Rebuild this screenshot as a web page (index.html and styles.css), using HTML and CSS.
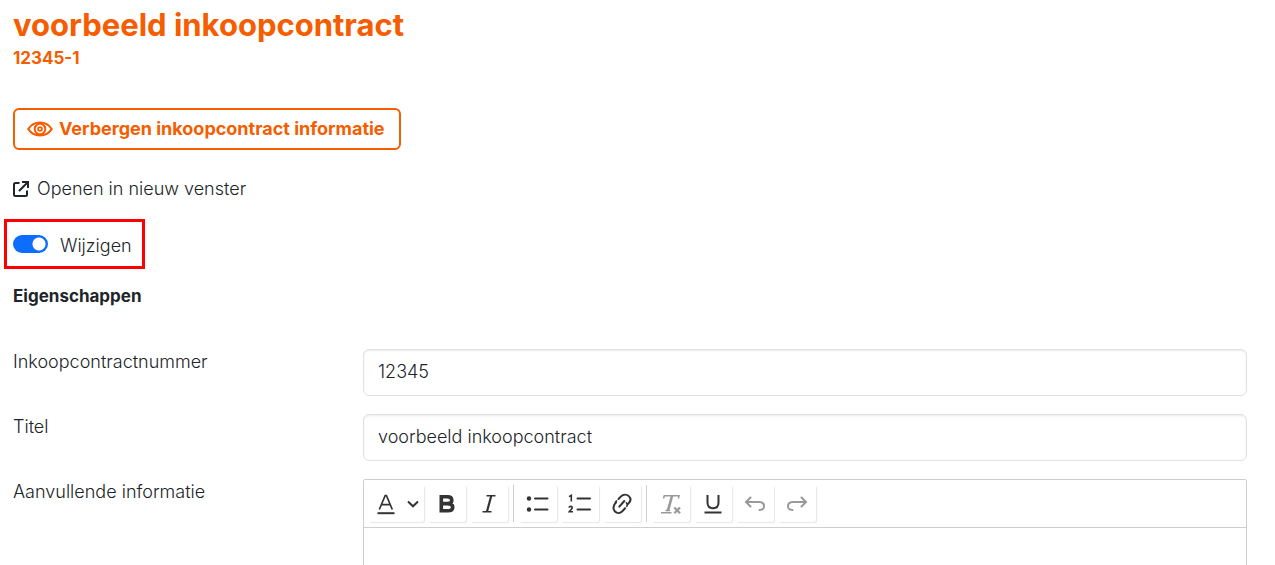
FILE: index.html
```html
<!DOCTYPE html>
<html lang="nl">

<head>
    <meta charset="UTF-8">
    <meta name="viewport" content="width=device-width, initial-scale=1.0">
    <title>voorbeeld inkoopcontract</title>
    <link rel="stylesheet" href="styles.css">
</head>

<body>
    <main class="page">
        <h1 class="title">voorbeeld inkoopcontract</h1>
        <p class="number">12345-1</p>

        <button type="button" class="toggle-info">
            <svg width="26" height="16" viewBox="0 0 26 16" fill="none" stroke="currentColor" stroke-width="2.200">
                <path d="M1.300 8C4 3.800 8.200 1.500 13 1.500S22 3.800 24.700 8C22 12.200 17.800 14.500 13 14.500S4 12.200 1.300 8Z" />
                <circle cx="13" cy="8" r="5.300" stroke-width="2" />
                <circle cx="13" cy="8" r="1.900" stroke-width="1.800" />
            </svg>
            <span>Verbergen inkoopcontract informatie</span>
        </button>

        <a class="open-link" href="#">
            <svg width="16" height="16" viewBox="0 0 16 16" fill="none" stroke="currentColor" stroke-width="2">
                <path d="M6.500 2H2.500Q1 2 1 3.500V13.500Q1 15 2.500 15H12.500Q14 15 14 13.500V9.500" />
                <path d="M9 1H15V7M15 1L6 10" />
            </svg>
            <span>Openen in nieuw venster</span>
        </a>

        <label class="edit-switch">
            <input type="checkbox" role="switch" checked>
            <span>Wijzigen</span>
        </label>

        <h2 class="section">Eigenschappen</h2>

        <form class="fields">
            <label for="contractnummer">Inkoopcontractnummer</label>
            <input class="field" id="contractnummer" type="text" value="12345">

            <label for="titel">Titel</label>
            <input class="field" id="titel" type="text" value="voorbeeld inkoopcontract">

            <label for="informatie">Aanvullende informatie</label>
            <div class="editor">
                <div class="toolbar" role="toolbar" aria-label="Opmaak">
                    <button type="button" class="tool tool-wide" aria-label="Tekstkleur">
                        <svg width="20" height="22" viewBox="0 0 20 22" fill="none" stroke="currentColor">
                            <path d="M3.300 16.500L9.200 2.500H10.400L16.300 16.500M5.500 11.700H14" stroke-width="1.700" />
                            <path d="M1.500 20.200H18.500" stroke-width="2" />
                        </svg>
                        <svg width="12" height="8" viewBox="0 0 12 8" fill="none" stroke="currentColor" stroke-width="2">
                            <path d="M1 1.500L6 6.300L11 1.500" />
                        </svg>
                    </button>
                    <button type="button" class="tool" aria-label="Vet">
                        <svg width="24" height="24" viewBox="0 0 24 24" fill="none" stroke="currentColor" stroke-width="3.600">
                            <path d="M4.500 4.800H12.500Q16.800 4.800 16.800 8.200T12.500 11.600H6.300M12.500 11.600Q17.700 11.600 17.700 15.200T12.800 18.800H4.500M6.300 4V19" />
                        </svg>
                    </button>
                    <button type="button" class="tool" aria-label="Cursief">
                        <svg width="24" height="24" viewBox="0 0 24 24" fill="none" stroke="currentColor">
                            <path d="M9.500 3.800H18.500M5.500 19.700H14.500" stroke-width="1.500" />
                            <path d="M14.200 4L10 19.500" stroke-width="2.200" />
                        </svg>
                    </button>
                    <span class="divider"></span>
                    <button type="button" class="tool" aria-label="Opsomming">
                        <svg width="24" height="24" viewBox="0 0 24 24" fill="none" stroke="currentColor">
                            <circle cx="3" cy="6.500" r="2.200" fill="currentColor" stroke="none" />
                            <circle cx="3" cy="17.500" r="2.200" fill="currentColor" stroke="none" />
                            <path d="M9 6.500H21.500M9 17.500H21.500" stroke-width="2" stroke-linecap="round" />
                        </svg>
                    </button>
                    <button type="button" class="tool" aria-label="Genummerde lijst">
                        <svg width="24" height="24" viewBox="0 0 24 24" fill="none" stroke="currentColor">
                            <path d="M1 4.600L3.300 3.300V9.500M1 15.700Q1.200 14.400 2.800 14.400Q4.200 14.400 4.200 15.700Q4.200 16.700 1.200 19.800H5" stroke-width="1.600" />
                            <path d="M9.500 6.500H22M9.500 17.500H22" stroke-width="2" stroke-linecap="round" />
                        </svg>
                    </button>
                    <button type="button" class="tool" aria-label="Link">
                        <svg width="24" height="24" viewBox="0 0 24 24" fill="none" stroke="currentColor" stroke-width="2" stroke-linecap="round">
                            <path d="M8.500 7L11 4.400C13.300 2.100 16.700 2.100 18.800 4.100S20.700 9 18.600 11.300L17.800 12.200" />
                            <path d="M6 10.400L5 11.600C3 14 3 17.500 5 19.500S10 21.500 12.300 19.300L15.100 16.300" />
                            <path d="M16.300 10.800Q18 12.500 16.800 14.300M5.500 11.200Q5.200 9.700 6.600 8.900" stroke-width="1.600" />
                            <path d="M9.300 14.700L14.300 9" />
                        </svg>
                    </button>
                    <span class="divider"></span>
                    <button type="button" class="tool" aria-label="Opmaak verwijderen" disabled>
                        <svg width="24" height="24" viewBox="0 0 24 24" fill="none" stroke="currentColor">
                            <path d="M4.500 6.500L5.300 3.700H20L19.400 6.500M2 20.700H12.500M6.500 18.500H11" stroke-width="1.500" />
                            <path d="M13 4L9 18.500" stroke-width="2.600" />
                            <path d="M15.300 15.500L21 21.200M21 15.500L15.300 21.200" stroke-width="2.200" />
                        </svg>
                    </button>
                    <button type="button" class="tool" aria-label="Onderstrepen">
                        <svg width="24" height="24" viewBox="0 0 24 24" fill="none" stroke="currentColor" stroke-width="2">
                            <path d="M6.500 3V10.500Q6.500 16.200 12 16.200T17.500 10.500V3" />
                            <path d="M3.500 20.500H20.500" />
                        </svg>
                    </button>
                    <button type="button" class="tool" aria-label="Ongedaan maken" disabled>
                        <svg width="24" height="24" viewBox="0 0 24 24" fill="none" stroke="currentColor" stroke-width="2" stroke-linecap="round">
                            <path d="M7.500 5.500L3 10L7.500 14.500M3 10H16.500Q21 10.300 21 14.200T16.500 18" />
                        </svg>
                    </button>
                    <button type="button" class="tool" aria-label="Opnieuw" disabled>
                        <svg width="24" height="24" viewBox="0 0 24 24" fill="none" stroke="currentColor" stroke-width="2" stroke-linecap="round">
                            <path d="M16.500 5.500L21 10L16.500 14.500M21 10H7.500Q3 10.300 3 14.200T7.500 18" />
                        </svg>
                    </button>
                </div>
                <textarea id="informatie" class="editor-text"></textarea>
            </div>
        </form>
    </main>
</body>

</html>
```
FILE: styles.css
```css
* {
    box-sizing: border-box;
}

body {
    margin: 0;
    font-family: Inter, "Liberation Sans", sans-serif;
    font-size: 18px;
    line-height: 24px;
    color: #212529;
    background-color: #fff;
    overflow: hidden;
}

.page {
    display: flex;
    flex-direction: column;
    align-items: flex-start;
    padding: 7px 28px 0 13px;
}

.title {
    margin: 0;
    font-size: 31px;
    line-height: 36px;
    font-weight: 700;
    color: #f55d00;
}

.number {
    margin: 3px 0 0;
    font-size: 17px;
    font-weight: 700;
    color: #f55d00;
}

.toggle-info {
    display: flex;
    align-items: center;
    gap: 6px;
    height: 42px;
    margin-top: 38px;
    padding: 0 14px 0 12px;
    font: inherit;
    font-weight: 700;
    color: #f55d00;
    background-color: #fff;
    border: 2px solid #f55d00;
    border-radius: 6px;
    cursor: pointer;
}

.open-link {
    display: flex;
    align-items: center;
    gap: 8px;
    margin-top: 27px;
    color: inherit;
    text-decoration: none;
    font-weight: 300;
}

/* Rood kader om de schakelaar */
.edit-switch {
    display: flex;
    align-items: center;
    gap: 12px;
    height: 50px;
    margin: 18px 0 0 -9px;
    padding: 0 10px 0 6px;
    font-weight: 300;
    border: 3px solid #f00;
}

.edit-switch span {
    padding-top: 3px;
}

.edit-switch input {
    appearance: none;
    width: 35px;
    height: 18px;
    margin: 0;
    border-radius: 9px;
    background: radial-gradient(circle at 26px 9px, #fff 6px, #0d6efd 7px);
}

.section {
    margin: 15px 0 0;
    font-size: 17px;
    font-weight: 700;
}

.fields {
    display: grid;
    grid-template-columns: 350px 1fr;
    row-gap: 18px;
    width: 100%;
    margin-top: 41px;
    font-weight: 300;
}

.fields label {
    padding-top: 1px;
}

.field {
    width: 100%;
    height: 47px;
    padding: 0 14px 2px;
    font: inherit;
    color: inherit;
    background-color: #fff;
    border: 1px solid #dee2e6;
    border-radius: 6px;
    box-shadow: inset 0 1px 2px rgba(0, 0, 0, 0.08);
}

.editor {
    border: 1px solid #ccced1;
    border-radius: 2px;
}

.toolbar {
    display: flex;
    align-items: center;
    gap: 4px;
    height: 48px;
    padding: 0 5px;
    border-bottom: 1px solid #ccced1;
}

.tool {
    display: flex;
    align-items: center;
    justify-content: center;
    width: 38px;
    height: 37px;
    padding: 0;
    color: #333;
    background-color: #fff;
    border: 0;
    border-radius: 2px;
    box-shadow: 1px 1px 1px rgba(0, 0, 0, 0.1);
}

.tool-wide {
    width: 55px;
    padding-left: 2px;
    gap: 11px;
}

.tool:disabled {
    color: #999;
}

.divider {
    width: 1px;
    height: 37px;
    margin: 0 1px;
    background-color: #ccced1;
}

.editor-text {
    display: block;
    width: 100%;
    height: 120px;
    padding: 12px;
    font: inherit;
    border: 0;
    resize: none;
}
```
